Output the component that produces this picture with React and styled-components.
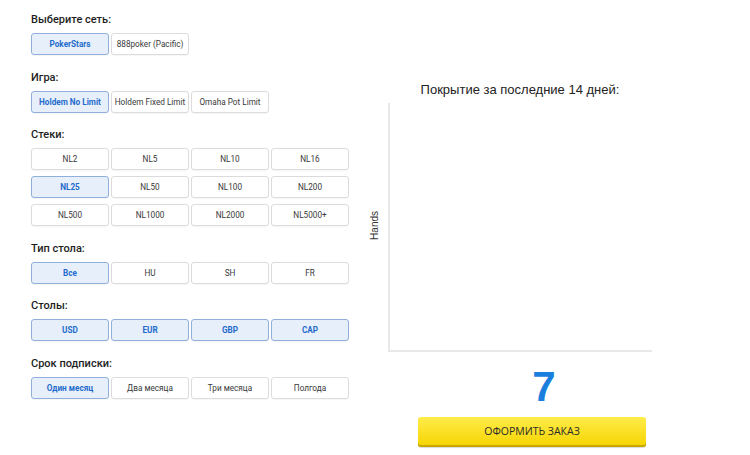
import React from "react";
import styled, { createGlobalStyle } from "styled-components";

const GlobalStyle = createGlobalStyle`
  html, body { margin: 0; padding: 0; background: #fff; }
  body { font-family: Roboto, "Liberation Sans", Arial, sans-serif; color: #222; }
`;

const Page = styled.div`
  display: flex;
  align-items: flex-start;
  width: 750px;
  height: 455px;
  box-sizing: border-box;
  padding: 12px 0 0 31px;
  overflow: hidden;
`;

const Left = styled.div`
  width: 318px;
  display: flex;
  flex-direction: column;
  gap: 14.5px;
`;

const Section = styled.section`
  display: flex;
  flex-direction: column;
`;

const Label = styled.div`
  font-family: Roboto, "Liberation Sans", sans-serif;
  font-size: 11px;
  font-weight: 500;
  line-height: 16px;
  color: #1e1e1e;
  margin-bottom: 5px;
`;

const Options = styled.div`
  display: grid;
  grid-template-columns: repeat(4, 78px);
  gap: 6px 2px;
`;

const Option = styled.button`
  height: 22px;
  box-sizing: border-box;
  margin: 0;
  padding: 0 2px;
  border-radius: 3px;
  border: 1px solid ${(p) => (p.$active ? "#8eb0db" : "#dcdcdc")};
  background: ${(p) => (p.$active ? "#e7effb" : "#fff")};
  color: ${(p) => (p.$active ? "#1f6ccc" : "#3a3a3a")};
  font-family: Roboto, "Liberation Sans", sans-serif;
  font-size: 8.2px;
  font-weight: ${(p) => (p.$active ? 700 : 400)};
  white-space: nowrap;
  box-shadow: 0 1px 1px rgba(0, 0, 0, 0.04);
  cursor: pointer;
`;

const Right = styled.div`
  margin-left: 11px;
  width: 344px;
  display: flex;
  flex-direction: column;
`;

const ChartTitle = styled.div`
  width: 320px;
  margin-top: 70px;
  text-align: center;
  font-family: "Liberation Sans", Arial, sans-serif;
  font-size: 13px;
  line-height: 16px;
  color: #222;
`;

const Chart = styled.div`
  display: flex;
  margin-top: 5px;
  height: 249px;
`;

const AxisLabelCol = styled.div`
  width: 28px;
  display: flex;
  align-items: center;
  justify-content: center;
  padding-bottom: 4px;
`;

const AxisLabel = styled.span`
  writing-mode: vertical-rl;
  transform: rotate(180deg);
  font-family: "Liberation Sans", Arial, sans-serif;
  font-size: 10px;
  color: #333;
`;

const Plot = styled.div`
  width: 264px;
  box-sizing: border-box;
  border-left: 2px solid #e8e8e8;
  border-bottom: 2px solid #e8e8e8;
`;

const Footer = styled.div`
  width: 344px;
  display: flex;
  flex-direction: column;
  align-items: center;
`;

const Count = styled.div`
  margin-top: 14px;
  margin-left: 24px;
  font-family: "Liberation Sans", Arial, sans-serif;
  font-weight: 700;
  font-size: 42px;
  line-height: 42px;
  color: #1a7fdc;
`;

const OrderButton = styled.button`
  margin-top: 9px;
  width: 228px;
  height: 30px;
  box-sizing: border-box;
  border: none;
  border-radius: 3px;
  background: linear-gradient(#ffec4a, #f6d400);
  box-shadow: inset 0 -2px 0 #c9a600, 0 1px 1px rgba(0, 0, 0, 0.15);
  font-family: "Open Sans", "Noto Sans", sans-serif;
  font-size: 10.5px;
  font-weight: 500;
  color: #2a2a2a;
  padding: 0 0 2px;
  cursor: pointer;
`;

const sections = [
  { label: "Выберите сеть:", items: ["PokerStars", "888poker (Pacific)"], active: ["PokerStars"] },
  { label: "Игра:", items: ["Holdem No Limit", "Holdem Fixed Limit", "Omaha Pot Limit"], active: ["Holdem No Limit"] },
  {
    label: "Стеки:",
    items: ["NL2", "NL5", "NL10", "NL16", "NL25", "NL50", "NL100", "NL200", "NL500", "NL1000", "NL2000", "NL5000+"],
    active: ["NL25"],
  },
  { label: "Тип стола:", items: ["Все", "HU", "SH", "FR"], active: ["Все"] },
  { label: "Столы:", items: ["USD", "EUR", "GBP", "CAP"], active: ["USD", "EUR", "GBP", "CAP"] },
  { label: "Срок подписки:", items: ["Один месяц", "Два месяца", "Три месяца", "Полгода"], active: ["Один месяц"] },
];

export default function App() {
  return (
    <>
      <GlobalStyle />
      <Page>
        <Left>
          {sections.map((s) => (
            <Section key={s.label}>
              <Label>{s.label}</Label>
              <Options>
                {s.items.map((it) => (
                  <Option key={it} $active={s.active.includes(it)}>
                    {it}
                  </Option>
                ))}
              </Options>
            </Section>
          ))}
        </Left>
        <Right>
          <ChartTitle>Покрытие за последние 14 дней:</ChartTitle>
          <Chart>
            <AxisLabelCol>
              <AxisLabel>Hands</AxisLabel>
            </AxisLabelCol>
            <Plot />
          </Chart>
          <Footer>
            <Count>7</Count>
            <OrderButton>ОФОРМИТЬ ЗАКАЗ</OrderButton>
          </Footer>
        </Right>
      </Page>
    </>
  );
}
